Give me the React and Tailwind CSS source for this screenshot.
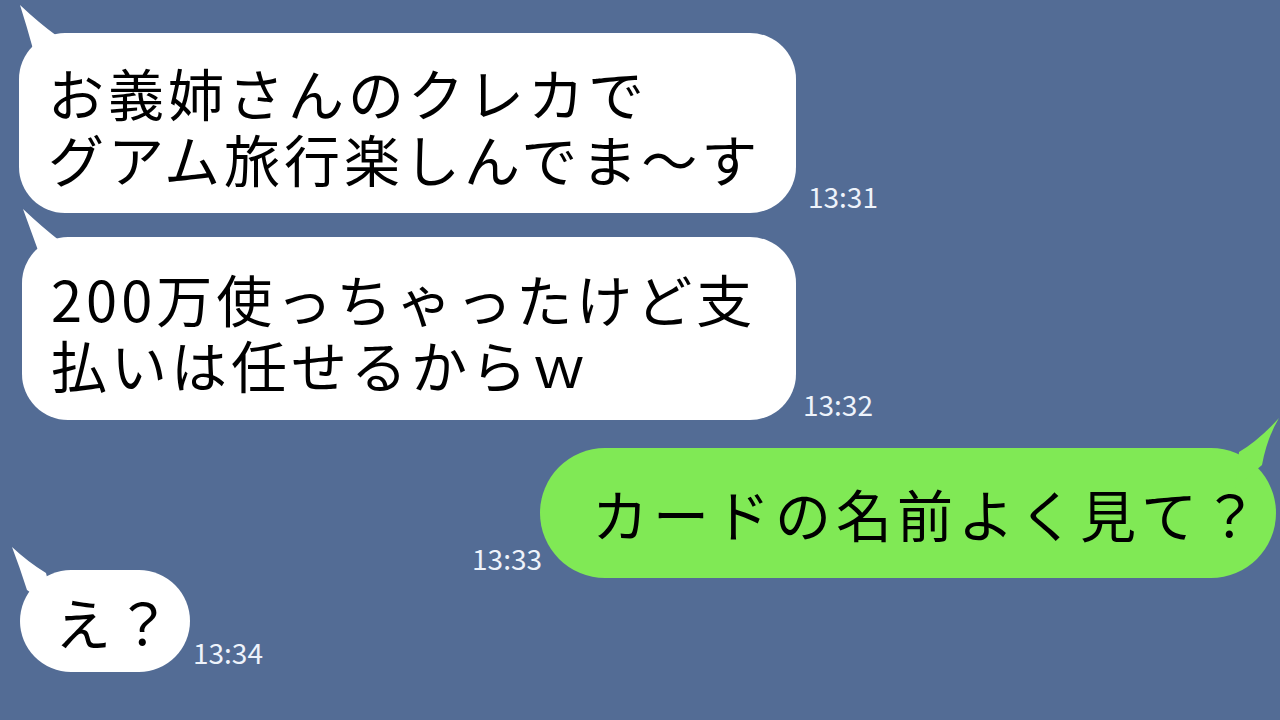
import React from "react";

const font = { fontFamily: '"Noto Sans CJK JP", "Noto Sans", sans-serif' };

// tail for bubbles from the other side (top-left)
function LeftTail({ d }) {
  return (
    <svg className="absolute left-0 top-0 overflow-visible" width="1" height="1">
      <path d={d} fill="#ffffff" />
    </svg>
  );
}

function Time({ children, className = "" }) {
  return (
    <span className={`text-[28px] leading-none text-[#eef3fb] whitespace-nowrap ${className}`}>
      {children}
    </span>
  );
}

export default function App() {
  return (
    <div className="w-[1280px] h-[720px] bg-[#536c95] overflow-hidden pt-[33px]" style={font}>
      {/* 1 */}
      <div className="flex items-end pl-[19px]">
        <div className="relative w-[777px] h-[180px] bg-white rounded-[46px] pl-[29px] pt-[26px] text-[56px] leading-[66px] tracking-[4px] text-black whitespace-nowrap">
          <LeftTail d="M1 -28 Q8 -6 14 16 L40 40 L38 3 Q20 -10 1 -28 Z" />
          <div>お義姉さんのクレカで</div>
          <div>グアム旅行楽しんでま〜す</div>
        </div>
        <Time className="ml-[12px] mb-[3px]">13:31</Time>
      </div>

      {/* 2 */}
      <div className="flex items-end pl-[22px] mt-[24px]">
        <div className="relative w-[774px] h-[183px] bg-white rounded-[46px] pl-[29px] pt-[28px] text-[56px] leading-[66px] tracking-[4px] text-black whitespace-nowrap">
          <LeftTail d="M1 -28 Q9 -6 17 16 L40 40 L38 4 Q20 -10 1 -28 Z" />
          <div>200万使っちゃったけど支</div>
          <div>払いは任せるからｗ</div>
        </div>
        <Time className="ml-[7px] mb-[2px]">13:32</Time>
      </div>

      {/* 3 */}
      <div className="flex items-end justify-end pr-[4px] mt-[28px]">
        <Time className="mr-[-2px] mb-[6px]">13:33</Time>
        <div className="relative w-[736px] h-[130px] bg-[#80e955] rounded-[65px] pl-[52px] flex items-center text-[56px] tracking-[5px] text-black whitespace-nowrap">
          <svg className="absolute right-0 top-0 overflow-visible" width="1" height="1">
            <path d="M4 -30 Q-8 -10 -13 17 L-40 40 L-36 4 Q-16 -8 4 -30 Z" fill="#80e955" />
          </svg>
          <span>カードの名前よく見て？</span>
        </div>
      </div>

      {/* 4 */}
      <div className="flex items-end pl-[20px] mt-[-8px]">
        <div className="relative w-[170px] h-[102px] bg-white rounded-[51px] pl-[35px] flex items-center text-[56px] tracking-[4px] text-black whitespace-nowrap">
          <LeftTail d="M-8 -23 Q0 -2 7 20 L35 40 L26 3 Q8 -8 -8 -23 Z" />
          <span>え？</span>
        </div>
        <Time className="ml-[3px] mb-[6px]">13:34</Time>
      </div>
    </div>
  );
}
